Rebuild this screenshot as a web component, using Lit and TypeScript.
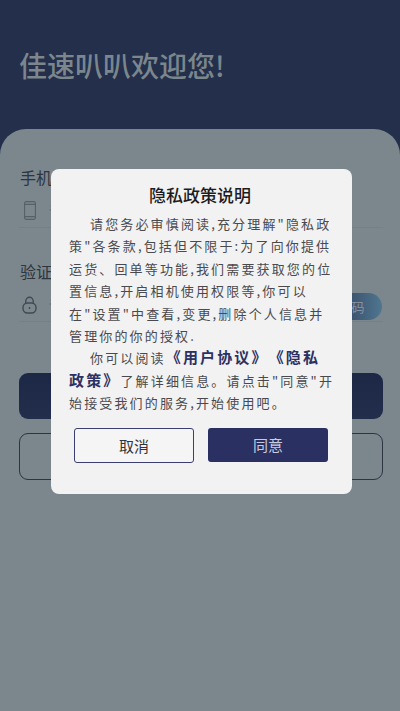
import { LitElement, html, css } from "lit";
import { customElement } from "lit/decorators.js";

@customElement("app-root")
export class AppRoot extends LitElement {
  static styles = css`
    :host {
      display: block;
      width: 400px;
      height: 711px;
      position: relative;
      overflow: hidden;
      background: #7b868d;
      font-family: "Noto Sans CJK SC", "Liberation Sans", sans-serif;
      text-spacing-trim: space-all;
    }
    .page { display: flex; flex-direction: column; height: 711px; background: #232f4b; }
    .head { height: 129px; box-sizing: border-box; padding: 46px 0 0 19px; flex: none; }
    .title { font-size: 28px; line-height: 38px; color: #7b868d; font-weight: 500; }
    .card {
      flex: 1;
      background: #7b868d;
      border-radius: 26px 26px 0 0;
      padding: 36px 17px 0 19px;
      display: flex;
      flex-direction: column;
    }
    .label { font-size: 16px; line-height: 24px; color: #2c3540; padding-left: 1px; }
    .field {
      display: flex;
      align-items: center;
      gap: 12px;
      height: 39px;
      box-sizing: border-box;
      padding: 5px 0 0 3px;
      border-bottom: 1px solid #747f87;
      margin-bottom: 31px;
    }
    .icon { width: 15px; display: flex; justify-content: center; flex: none; }
    .hint { font-size: 13px; color: #5d6872; flex: 1; }
    .pill {
      width: 100px;
      height: 27px;
      margin: 3px 1px 0 0;
      border-radius: 14px;
      background: linear-gradient(90deg, #2d3b58 0%, #3a4f6b 65%, #4f7690 100%);
      color: #8592a0;
      font-size: 13px;
      line-height: 27px;
      text-align: center;
      flex: none;
    }
    .login {
      margin-top: 20px;
      height: 46px;
      border-radius: 9px;
      background: linear-gradient(180deg, #1d2846, #222e4c);
      color: #7b868d;
      font-size: 16px;
      display: flex;
      align-items: center;
      justify-content: center;
    }
    .reg {
      margin-top: 14px;
      height: 47px;
      box-sizing: border-box;
      border: 1px solid #2c3540;
      border-radius: 9px;
      color: #2c3540;
      font-size: 16px;
      display: flex;
      align-items: center;
      justify-content: center;
    }
    .scrim { position: absolute; inset: 0; display: flex; justify-content: center; align-items: flex-start; }
    .dialog {
      margin-top: 169px;
      margin-left: 3px;
      width: 301px;
      height: 325px;
      box-sizing: border-box;
      background: #f2f2f3;
      border-radius: 8px;
      padding: 15px 18px 0 18px;
      display: flex;
      flex-direction: column;
    }
    .dlg-title { text-align: center; font-size: 17px; line-height: 22px; color: #1c1c1f; font-weight: 500; padding-right: 3px; }
    .body {
      margin-top: 7px;
      font-size: 13px;
      line-height: 22.4px;
      letter-spacing: 2.15px;
      color: #4a4a4e;
      white-space: nowrap;
    }
    .body p { margin: 0; text-indent: 21px; }
    .link { color: #2b3163; font-weight: 700; font-size: 15px; line-height: 1; }
    .btns { display: flex; justify-content: space-between; margin: 13px 6px 0 5px; }
    .btn {
      width: 120px;
      height: 35px;
      box-sizing: border-box;
      border-radius: 3px;
      font-size: 15px;
      display: flex;
      align-items: center;
      justify-content: center;
    }
    .cancel { border: 1px solid #3a3f70; color: #333338; background: #f5f5f6; }
    .ok { background: #2a3162; color: #c9cce0; height: 34px; }
  `;

  render() {
    return html`
      <div class="page">
        <div class="head"><div class="title">佳速叭叭欢迎您!</div></div>
        <div class="card">
          <div class="label">手机号</div>
          <div class="field">
            <span class="icon">
              <svg width="12" height="19" viewBox="0 0 12 19" fill="none" stroke="#566069" stroke-width="1.1">
                <rect x=".6" y=".6" width="10.8" height="17.8" rx="1.6" />
                <path d="M.6 3.4h10.8M.6 15.6h10.8" />
              </svg>
            </span>
            <div class="hint">请输入手机号</div>
          </div>
          <div class="label">验证码</div>
          <div class="field">
            <span class="icon">
              <svg width="15" height="18" viewBox="0 0 15 18" fill="none" stroke="#404a54" stroke-width="1.4">
                <rect x="1" y="7" width="13" height="10" rx="4.5" />
                <path d="M3.8 7.5V5a3.7 3.7 0 0 1 7.4 0v2.5" />
                <path d="M7.5 11v2" />
              </svg>
            </span>
            <div class="hint">请输入验证码</div>
            <div class="pill">获取验证码</div>
          </div>
          <div class="login">登录</div>
          <div class="reg">注册</div>
        </div>
      </div>
      <div class="scrim">
        <div class="dialog">
          <div class="dlg-title">隐私政策说明</div>
          <div class="body">
            <p>请您务必审慎阅读,充分理解"隐私政</p>
            <div>策"各条款,包括但不限于:为了向你提供</div>
            <div>运货、回单等功能,我们需要获取您的位</div>
            <div>置信息,开启相机使用权限等,你可以</div>
            <div>在"设置"中查看,变更,删除个人信息并</div>
            <div>管理你的你的授权.</div>
            <p>你可以阅读<span class="link">《用户协议》《隐私</span></p>
            <div><span class="link">政策》</span>了解详细信息。请点击"同意"开</div>
            <div>始接受我们的服务,开始使用吧。</div>
          </div>
          <div class="btns">
            <div class="btn cancel">取消</div>
            <div class="btn ok">同意</div>
          </div>
        </div>
      </div>
    `;
  }
}
